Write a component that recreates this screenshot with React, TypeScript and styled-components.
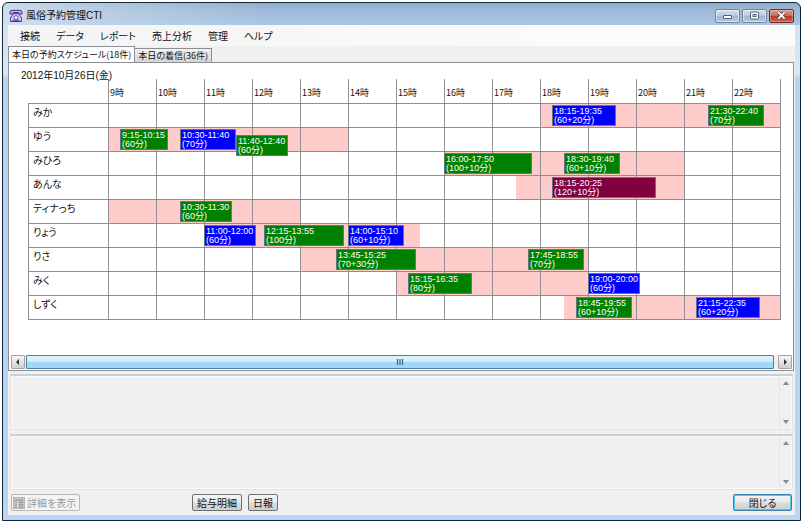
import React, { useState } from "react";
import styled, { createGlobalStyle, css } from "styled-components";

const LINE = "#8f8f8f";
const SHIFT = "#ffcccc";
const FIRST_HOUR = 9;
const HOURS = Array.from({ length: 14 }, (_, i) => FIRST_HOUR + i);

type Tone = "green" | "blue" | "wine";
const TONES: Record<Tone, string> = { green: "#008000", blue: "#0000ff", wine: "#800040" };

interface Booking {
  from: string;
  to: string;
  length: string;
  tone: Tone;
  lowered?: boolean;
}
interface Staff {
  name: string;
  shift: [number, number];
  bookings: Booking[];
}

const STAFF: Staff[] = [
  {
    name: "みか",
    shift: [18, 23],
    bookings: [
      { from: "18:15", to: "19:35", length: "60+20分", tone: "blue" },
      { from: "21:30", to: "22:40", length: "70分", tone: "green" },
    ],
  },
  {
    name: "ゆう",
    shift: [9, 14],
    bookings: [
      { from: "9:15", to: "10:15", length: "60分", tone: "green" },
      { from: "10:30", to: "11:40", length: "70分", tone: "blue" },
      { from: "11:40", to: "12:40", length: "60分", tone: "green", lowered: true },
    ],
  },
  {
    name: "みひろ",
    shift: [16, 21],
    bookings: [
      { from: "16:00", to: "17:50", length: "100+10分", tone: "green" },
      { from: "18:30", to: "19:40", length: "60+10分", tone: "green" },
    ],
  },
  {
    name: "あんな",
    shift: [17.5, 21],
    bookings: [{ from: "18:15", to: "20:25", length: "120+10分", tone: "wine" }],
  },
  {
    name: "ティナっち",
    shift: [9, 13],
    bookings: [{ from: "10:30", to: "11:30", length: "60分", tone: "green" }],
  },
  {
    name: "りょう",
    shift: [11, 15.5],
    bookings: [
      { from: "11:00", to: "12:00", length: "60分", tone: "blue" },
      { from: "12:15", to: "13:55", length: "100分", tone: "green" },
      { from: "14:00", to: "15:10", length: "60+10分", tone: "blue" },
    ],
  },
  {
    name: "りさ",
    shift: [13, 19],
    bookings: [
      { from: "13:45", to: "15:25", length: "70+30分", tone: "green" },
      { from: "17:45", to: "18:55", length: "70分", tone: "green" },
    ],
  },
  {
    name: "みく",
    shift: [15, 19],
    bookings: [
      { from: "15:15", to: "16:35", length: "80分", tone: "green" },
      { from: "19:00", to: "20:00", length: "60分", tone: "blue" },
    ],
  },
  {
    name: "しずく",
    shift: [18.5, 23],
    bookings: [
      { from: "18:45", to: "19:55", length: "60+10分", tone: "green" },
      { from: "21:15", to: "22:35", length: "60+20分", tone: "blue" },
    ],
  },
];

const toHours = (time: string) => {
  const [h, m] = time.split(":").map(Number);
  return h + m / 60;
};
const percentOf = (value: number, hour: number) =>
  Math.min(100, Math.max(0, (value - hour) * 100));

const GlobalStyle = createGlobalStyle`
  *, *::before, *::after { box-sizing: border-box; }
  body {
    margin: 0;
    background: #fff;
    color: #111;
    font: 10px/12px "Noto Sans CJK JP", sans-serif;
    font-feature-settings: "palt";
  }
  button, textarea { font: inherit; font-feature-settings: inherit; color: inherit; margin: 0; }
`;

const Page = styled.div`
  display: flex;
  min-height: 100vh;
  padding: 2px 3px 2px 2px;
`;

const WindowFrame = styled.main`
  flex: 1;
  min-width: 0;
  display: flex;
  flex-direction: column;
  padding: 0 5px 5px;
  border: 1px solid #10263a;
  border-radius: 6px 6px 0 0;
  background:
    linear-gradient(to right, rgba(222, 232, 242, 0.75), rgba(205, 220, 235, 0.5) 14%, transparent 34%) 0 0 / 100% 22px no-repeat,
    linear-gradient(#8fabc9, #9db9d6 30%, #a8c7e6) 0 0 / 100% 22px no-repeat,
    linear-gradient(#d3e2f1, #d9e6f3 70px, #b9d3eb 76px, #b9d5ef);
`;

const TitleBar = styled.header`
  display: flex;
  align-items: center;
  height: 22px;
  padding: 3px 1px 0 1px;
  gap: 3px;
`;

const Title = styled.h1`
  flex: 1;
  margin: 0;
  font-family: "Liberation Sans", "Noto Sans CJK JP", sans-serif;
  font-size: 10px;
  font-weight: 400;
`;

const CaptionButtons = styled.div`
  display: flex;
  gap: 2px;
`;

const CaptionButton = styled.button<{ $danger?: boolean }>`
  display: grid;
  place-items: center;
  width: 25px;
  height: 14px;
  padding: 0;
  border: 1px solid #6f87a3;
  border-radius: 2px;
  background: linear-gradient(#d3dfec, #bccde0 45%, #9fb6d0 50%, #b6cbe2);
  box-shadow: inset 0 0 0 1px rgba(255, 255, 255, 0.45);
  ${({ $danger }) =>
    $danger &&
    css`
      border-color: #7a2a22;
      background: linear-gradient(#dd9a8e, #cf6d5d 45%, #b93a29 50%, #cc6150);
      box-shadow: inset 0 0 0 1px rgba(255, 255, 255, 0.25);
    `}
`;

const Client = styled.div`
  flex: 1;
  display: flex;
  flex-direction: column;
  background: #f0f0f0;
`;

const MenuBar = styled.nav`
  display: flex;
  align-items: center;
  height: 21px;
  gap: 16px;
  padding: 0 12px;
  background: linear-gradient(to right, #f4f4f4, #fbfbfb 75%);
`;

const MenuItem = styled.button`
  padding: 0;
  border: 0;
  background: none;
`;

const TabStrip = styled.div`
  display: flex;
  align-items: flex-end;
  height: 17px;
  margin-bottom: -1px;
`;

const Tab = styled.button<{ $active: boolean }>`
  height: ${({ $active }) => ($active ? 17 : 15)}px;
  padding: 0 3px;
  border: 1px solid #8c8e94;
  border-left-width: ${({ $active }) => ($active ? 1 : 0)}px;
  border-bottom-color: ${({ $active }) => ($active ? "#fff" : "#8c8e94")};
  background: ${({ $active }) => ($active ? "#fff" : "linear-gradient(#f2f2f2, #d5d5d5)")};
  font-size: 9px;
  white-space: nowrap;
`;

const SchedulePanel = styled.section`
  flex: 1;
  display: flex;
  flex-direction: column;
  margin-right: 1px;
  border: 1px solid #8c8e94;
  background: #fff;
`;

const ScheduleBody = styled.div`
  flex: 1;
  padding: 7px 12px 16px 19px;
`;

const DateHeading = styled.h2`
  height: 9px;
  margin: 0;
  text-indent: -7px;
  font-family: "Liberation Sans", "Noto Sans CJK JP", sans-serif;
  font-size: 10px;
  line-height: 12px;
  font-weight: 400;
`;

const Timetable = styled.table`
  width: 100%;
  table-layout: fixed;
  border-collapse: separate;
  border-spacing: 0;
  border-right: 1px solid ${LINE};
  border-bottom: 1px solid ${LINE};
`;

const NameColumn = styled.col`
  width: 80px;
`;

const HourHead = styled.th`
  height: 24px;
  padding: 8px 0 0 1px;
  border-left: 1px solid ${LINE};
  text-align: left;
  vertical-align: top;
  font-size: 9px;
  line-height: 12px;
  font-weight: 400;
`;

const NameHead = styled.th`
  height: 24px;
  padding: 2px 0 0 4px;
  border-top: 1px solid ${LINE};
  border-left: 1px solid ${LINE};
  text-align: left;
  vertical-align: top;
  font-weight: 400;
`;

const Slot = styled.td<{ $start: number; $end: number }>`
  position: relative;
  height: 24px;
  padding: 0;
  background:
    linear-gradient(${LINE}, ${LINE}) 0 0 / 100% 1px no-repeat,
    linear-gradient(${LINE}, ${LINE}) 0 0 / 1px 100% no-repeat,
    linear-gradient(
      to right,
      transparent ${({ $start }) => $start}%,
      ${SHIFT} ${({ $start }) => $start}% ${({ $end }) => $end}%,
      transparent ${({ $end }) => $end}%
    );
`;

const BookingBlock = styled.button<{ $tone: Tone; $lowered?: boolean; $short: boolean }>`
  position: absolute;
  z-index: 1;
  top: ${({ $lowered }) => ($lowered ? 8 : 2)}px;
  height: 21px;
  min-width: ${({ $short }) => ($short ? 48 : 52)}px;
  padding: 0 0 0 1px;
  overflow: hidden;
  border: 1px solid #6b7280;
  background: ${({ $tone }) => TONES[$tone]};
  color: #fff;
  text-align: left;
  white-space: nowrap;
  font-family: "Liberation Sans", "Noto Sans CJK JP", sans-serif;
  font-size: 9px;
  line-height: 9px;
`;

const BookingLine = styled.span`
  display: block;
`;

const ScrollRow = styled.div`
  display: flex;
  height: 14px;
  margin: 0 1px 1px 2px;
  background: #f0f0f0;
`;

const ScrollButton = styled.button`
  display: grid;
  place-items: center;
  width: 14px;
  padding: 0;
  border: 1px solid #a3a3a3;
  border-radius: 1px;
  background: linear-gradient(#f6f6f6, #e4e4e4 50%, #cfcfcf);
`;

const ScrollTrack = styled.div`
  flex: 1;
  display: flex;
  padding: 0 4px 0 1px;
`;

const ScrollThumb = styled.div`
  flex: 1;
  display: grid;
  place-items: center;
  border: 1px solid #4b7fa3;
  border-radius: 1px;
  background: linear-gradient(#e2f4fd, #ccecfb 48%, #a3daf7 52%, #a0d4f2);
`;

const MemoPane = styled.section`
  display: flex;
  height: 56px;
  margin: 3px 2px 0;
  border: 1px solid #e3e3e3;
  border-top: 2px solid #cdcfd2;
  box-shadow: inset 1px 1px #fafafa, inset -1px -1px #fafafa;

  & + & {
    margin-top: 4px;
  }
`;

const MemoText = styled.textarea`
  flex: 1;
  min-width: 0;
  padding: 3px;
  border: 0;
  outline: 0;
  resize: none;
  overflow: hidden;
  background: transparent;
`;

const MemoScroll = styled.div`
  display: flex;
  flex-direction: column;
  justify-content: space-between;
  width: 13px;
  border-left: 1px solid #e4e4e4;
`;

const MemoScrollButton = styled.button`
  display: grid;
  place-items: center;
  height: 14px;
  padding: 0;
  border: 0;
  background: none;
`;

const Footer = styled.footer`
  display: grid;
  grid-template-columns: 181px 1fr auto;
  align-items: center;
  height: 25px;
  padding: 0 3px;
`;

const ButtonGroup = styled.div`
  display: flex;
  gap: 6px;
`;

const PushButton = styled.button<{ $primary?: boolean }>`
  display: inline-flex;
  align-items: center;
  justify-content: center;
  justify-self: start;
  gap: 2px;
  height: 17px;
  min-width: ${({ $primary }) => ($primary ? 59 : 30)}px;
  padding: 0 4px;
  border: 1px solid #707070;
  border-radius: 2px;
  background: linear-gradient(#f4f4f4, #ebebeb 48%, #dcdcdc 52%, #cfcfcf);
  white-space: nowrap;

  ${({ $primary }) =>
    $primary &&
    css`
      border-color: #3c7fb1;
      box-shadow: inset 0 0 0 1px #4fc6ee;
    `}

  &:disabled {
    padding: 0 3px 0 1px;
    border-color: #b5b8bb;
    background: #f4f4f4;
    color: #9a9a9a;
  }
`;

const PhoneIcon = () => (
  <svg width="14" height="14" viewBox="0 0 14 14" aria-hidden="true">
    <path d="M1 5V3.2Q1 1.3 3 1.3h8q2 0 2 1.9V5H9.6V3.6H4.4V5z" fill="#b9a7ef" stroke="#4b318f" />
    <path d="M4.6 4.6h4.8l3 4.2v3.7H1.6V8.8z" fill="#d9d0fa" stroke="#4b318f" />
    <circle cx="7" cy="8.6" r="2" fill="#fff" stroke="#5b3fa6" />
    <path d="M3.4 11.3h7.2" stroke="#5b3fa6" />
  </svg>
);

const MinimizeIcon = () => (
  <svg width="11" height="8" viewBox="0 0 11 8" aria-hidden="true">
    <rect x="1.5" y="3.5" width="8" height="3" rx="0.5" fill="#fff" stroke="#56616e" />
  </svg>
);

const MaximizeIcon = () => (
  <svg width="11" height="9" viewBox="0 0 11 9" aria-hidden="true">
    <rect x="1.5" y="1" width="8" height="7" rx="0.5" fill="#fff" stroke="#56616e" />
    <rect x="4" y="3.5" width="3" height="2" fill="#a9bdd4" stroke="#56616e" />
  </svg>
);

const CloseIcon = () => (
  <svg width="11" height="9" viewBox="0 0 11 9" aria-hidden="true">
    <path d="M2.4 1.4l6.2 6.2M8.6 1.4L2.4 7.6" stroke="#57403f" strokeWidth="3.6" />
    <path d="M2.4 1.4l6.2 6.2M8.6 1.4L2.4 7.6" stroke="#fff" strokeWidth="2" />
  </svg>
);

const ARROWS = {
  left: "M5 1v6L2 4z",
  right: "M3 1v6l3-3z",
  up: "M1 6h6L4 2z",
  down: "M1 2h6L4 6z",
};
const Arrow = ({ to, color }: { to: keyof typeof ARROWS; color: string }) => (
  <svg width="8" height="8" viewBox="0 0 8 8" aria-hidden="true">
    <path d={ARROWS[to]} fill={color} />
  </svg>
);

const GripIcon = () => (
  <svg width="8" height="6" viewBox="0 0 8 6" aria-hidden="true">
    <path d="M1.5 0v6M4 0v6M6.5 0v6" stroke="#2f7099" strokeWidth="1.3" />
  </svg>
);

const DetailIcon = () => (
  <svg width="12" height="12" viewBox="0 0 13 13" aria-hidden="true">
    <rect x="0.5" y="0.5" width="12" height="12" fill="#c4c4c4" stroke="#b0b0b0" />
    <path d="M2 3.5h9M2.5 6h2M2.5 8.5h2M2.5 11h2M6 6h5M6 8.5h5M6 11h5" stroke="#8e8e8e" />
    <path d="M5.2 4.5v8" stroke="#f0f0f0" />
  </svg>
);

const MENUS = ["接続", "データ", "レポート", "売上分析", "管理", "ヘルプ"];
const TABS = ["本日の予約スケジュール(18件)", "本日の着信(36件)"];

const BookingItem = ({ booking, hour }: { booking: Booking; hour: number }) => {
  const start = toHours(booking.from);
  const end = toHours(booking.to);
  return (
    <BookingBlock
      type="button"
      $tone={booking.tone}
      $lowered={booking.lowered}
      $short={booking.from.length < 5}
      style={{ left: `${(start - hour) * 100}%`, width: `${(end - start) * 100}%` }}
    >
      <BookingLine>{`${booking.from}-${booking.to}`}</BookingLine>
      <BookingLine>{`(${booking.length})`}</BookingLine>
    </BookingBlock>
  );
};

const Memo = ({ label }: { label: string }) => (
  <MemoPane>
    <MemoText aria-label={label} readOnly />
    <MemoScroll>
      <MemoScrollButton type="button" aria-label="上へ">
        <Arrow to="up" color="#8a8a8a" />
      </MemoScrollButton>
      <MemoScrollButton type="button" aria-label="下へ">
        <Arrow to="down" color="#8a8a8a" />
      </MemoScrollButton>
    </MemoScroll>
  </MemoPane>
);

export default function App() {
  const [tab, setTab] = useState(0);
  return (
    <>
      <GlobalStyle />
      <Page>
        <WindowFrame>
          <TitleBar>
            <PhoneIcon />
            <Title>風俗予約管理CTI</Title>
            <CaptionButtons>
              <CaptionButton type="button" aria-label="最小化">
                <MinimizeIcon />
              </CaptionButton>
              <CaptionButton type="button" aria-label="最大化">
                <MaximizeIcon />
              </CaptionButton>
              <CaptionButton type="button" aria-label="ウィンドウを閉じる" $danger>
                <CloseIcon />
              </CaptionButton>
            </CaptionButtons>
          </TitleBar>
          <Client>
            <MenuBar>
              {MENUS.map((menu) => (
                <MenuItem type="button" key={menu}>
                  {menu}
                </MenuItem>
              ))}
            </MenuBar>
            <TabStrip role="tablist">
              {TABS.map((label, i) => (
                <Tab
                  type="button"
                  role="tab"
                  key={label}
                  aria-selected={tab === i}
                  $active={tab === i}
                  onClick={() => setTab(i)}
                >
                  {label}
                </Tab>
              ))}
            </TabStrip>
            <SchedulePanel role="tabpanel">
              <ScheduleBody>
                <DateHeading>2012年10月26日(金)</DateHeading>
                <Timetable>
                  <colgroup>
                    <NameColumn />
                    {HOURS.map((hour) => (
                      <col key={hour} />
                    ))}
                  </colgroup>
                  <thead>
                    <tr>
                      <td />
                      {HOURS.map((hour) => (
                        <HourHead scope="col" key={hour}>
                          {hour}時
                        </HourHead>
                      ))}
                    </tr>
                  </thead>
                  <tbody>
                    {STAFF.map(({ name, shift, bookings }) => (
                      <tr key={name}>
                        <NameHead scope="row">{name}</NameHead>
                        {HOURS.map((hour) => (
                          <Slot
                            key={hour}
                            $start={percentOf(shift[0], hour)}
                            $end={percentOf(shift[1], hour)}
                          >
                            {bookings
                              .filter(({ from }) => Math.floor(toHours(from)) === hour)
                              .map((booking) => (
                                <BookingItem key={booking.from} booking={booking} hour={hour} />
                              ))}
                          </Slot>
                        ))}
                      </tr>
                    ))}
                  </tbody>
                </Timetable>
              </ScheduleBody>
              <ScrollRow>
                <ScrollButton type="button" aria-label="左へ">
                  <Arrow to="left" color="#333" />
                </ScrollButton>
                <ScrollTrack>
                  <ScrollThumb>
                    <GripIcon />
                  </ScrollThumb>
                </ScrollTrack>
                <ScrollButton type="button" aria-label="右へ">
                  <Arrow to="right" color="#333" />
                </ScrollButton>
              </ScrollRow>
            </SchedulePanel>
            <Memo label="予約メモ" />
            <Memo label="着信メモ" />
            <Footer>
              <PushButton type="button" disabled>
                <DetailIcon />
                詳細を表示
              </PushButton>
              <ButtonGroup>
                <PushButton type="button">給与明細</PushButton>
                <PushButton type="button">日報</PushButton>
              </ButtonGroup>
              <PushButton type="button" $primary>
                閉じる
              </PushButton>
            </Footer>
          </Client>
        </WindowFrame>
      </Page>
    </>
  );
}
